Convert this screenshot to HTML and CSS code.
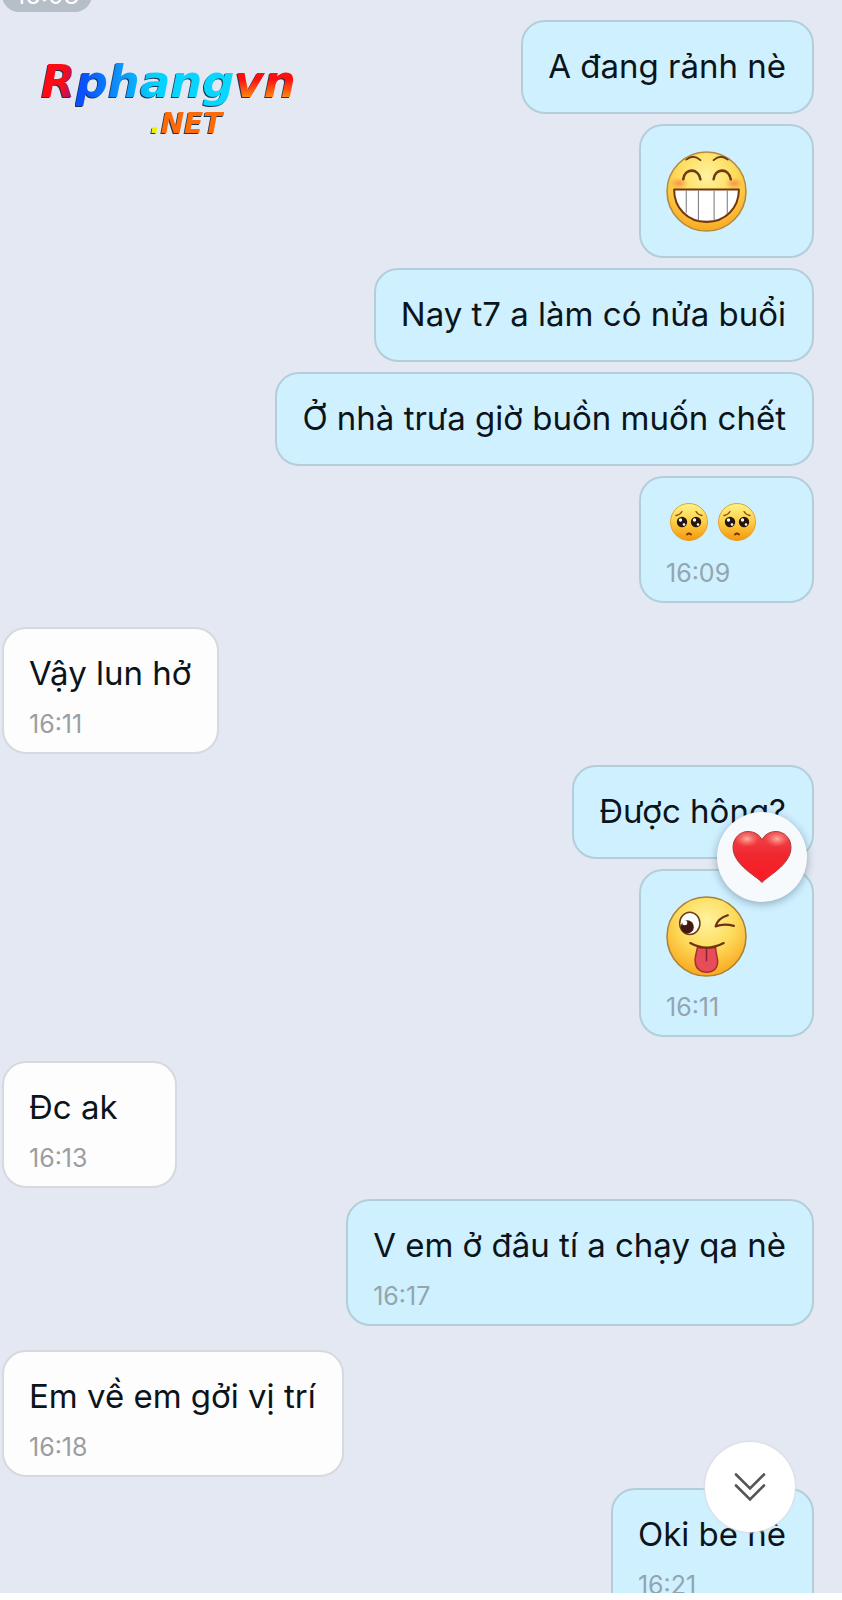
FILE: index.html
```html
<!DOCTYPE html>
<html lang="vi">
<head>
    <meta charset="UTF-8">
    <meta name="viewport" content="width=device-width, initial-scale=1">
    <title>Tin nhắn</title>
    <link rel="stylesheet" href="styles.css">
</head>
<body>
    <!-- Shared emoji shapes -->
    <svg class="defs" aria-hidden="true">
        <defs>
            <radialGradient id="face" cx="50%" cy="30%" r="72%">
                <stop offset="0" stop-color="#fff3a0"/>
                <stop offset="0.5" stop-color="#fddc5c"/>
                <stop offset="1" stop-color="#f9a51c"/>
            </radialGradient>
            <linearGradient id="face-small" x1="0" y1="0" x2="0" y2="1">
                <stop offset="0" stop-color="#fff389"/>
                <stop offset="0.5" stop-color="#fdce43"/>
                <stop offset="1" stop-color="#f5960f"/>
            </linearGradient>
            <radialGradient id="blush">
                <stop offset="0" stop-color="#f4673a" stop-opacity="0.6"/>
                <stop offset="1" stop-color="#f4673a" stop-opacity="0"/>
            </radialGradient>
            <linearGradient id="heart" x1="0" y1="0" x2="0" y2="1">
                <stop offset="0" stop-color="#ee4a4d"/>
                <stop offset="0.45" stop-color="#f0272f"/>
                <stop offset="1" stop-color="#fb1a24"/>
            </linearGradient>
            <radialGradient id="shine">
                <stop offset="0" stop-color="#ffc3b0" stop-opacity="0.85"/>
                <stop offset="1" stop-color="#ff8a80" stop-opacity="0"/>
            </radialGradient>
            <symbol id="pleading" viewBox="0 0 38 38">
                <circle cx="19" cy="19" r="18.5" fill="url(#face-small)" stroke="#e2a234" stroke-width="1"/>
                <path d="M6 12.500q4.500-1 6-4M32 12.500q-4.500-1-6-4" fill="none" stroke="#8a5410" stroke-width="1.3" stroke-linecap="round"/>
                <circle cx="12" cy="19" r="5.2" fill="#24160c"/>
                <circle cx="26" cy="19" r="5.2" fill="#24160c"/>
                <g fill="#fff">
                    <circle cx="10.5" cy="17" r="1.700"/>
                    <circle cx="24.5" cy="17" r="1.700"/>
                    <circle cx="14" cy="21.5" r="1.3"/>
                    <circle cx="28" cy="21.5" r="1.3"/>
                </g>
                <path d="M17 31.500q2-2 4 0" fill="none" stroke="#7d2c0c" stroke-width="1.800" stroke-linecap="round"/>
            </symbol>
        </defs>
    </svg>

    <main class="chat">
        <div class="chip-row"><span class="chip">16:08</span></div>

        <div class="logo">
            <div class="logo-name"><span class="c-r">R</span><span class="c-blue">phang</span><span class="c-vn">vn</span></div>
            <div class="logo-net"><span class="c-dot">.</span>NET</div>
        </div>

        <section class="group me">
            <div class="bubble"><p>A đang rảnh nè</p></div>
            <div class="bubble sticker">
                <svg class="emoji" viewBox="0 0 80 80" role="img" aria-label="Cười">
                    <circle cx="40" cy="40" r="39" fill="url(#face)" stroke="#b58a3c" stroke-width="1.500"/>
                    <ellipse cx="13" cy="32" rx="9" ry="6" fill="url(#blush)"/>
                    <ellipse cx="67" cy="32" rx="9" ry="6" fill="url(#blush)"/>
                    <path d="M20 8.500q7-6 14 .5M47 9q7-6.500 14-.5" fill="none" stroke="#6d3a12" stroke-width="1.800" stroke-linecap="round"/>
                    <path d="M17 28c1-11 15-12 17 0M47 28c1-11 15-12 17 0" fill="none" stroke="#6d3a12" stroke-width="2.500" stroke-linecap="round"/>
                    <path d="M8 38h64c0 18-13 32-32 32S8 56 8 38z" fill="#fff" stroke="#74360d" stroke-width="2" stroke-linejoin="round"/>
                    <path d="M20 39v22M32 39v30M47.500 39v30M60.500 39v23" stroke="#777" stroke-width="1"/>
                </svg>
            </div>
            <div class="bubble"><p>Nay t7 a làm có nửa buổi</p></div>
            <div class="bubble"><p>Ở nhà trưa giờ buồn muốn chết</p></div>
            <div class="bubble">
                <p class="emoji-line">
                    <svg class="emoji-small" role="img" aria-label="Năn nỉ"><use href="#pleading"/></svg>
                    <svg class="emoji-small" role="img" aria-label="Năn nỉ"><use href="#pleading"/></svg>
                </p>
                <time>16:09</time>
            </div>
        </section>

        <section class="group them">
            <div class="bubble">
                <p>Vậy lun hở</p>
                <time>16:11</time>
            </div>
        </section>

        <section class="group me">
            <div class="bubble">
                <p>Được hông?</p>
                <button class="reaction" type="button" aria-label="Yêu thích">
                    <svg viewBox="0 0 60 54">
                        <path d="M30 52.500C26 47 1 35 1 17.500C1 8 8 1.500 16 1.500C22.500 1.500 28 5 30 10C32 5 37.500 1.500 44 1.500C52 1.500 59 8 59 17.500C59 35 34 47 30 52.500z" fill="url(#heart)" stroke="#a83a3c" stroke-width="1"/>
                        <ellipse cx="15" cy="9" rx="12" ry="8" fill="url(#shine)"/>
                        <ellipse cx="45" cy="9" rx="12" ry="8" fill="url(#shine)"/>
                    </svg>
                </button>
            </div>
            <div class="bubble sticker">
                <svg class="emoji" viewBox="0 0 80 80" role="img" aria-label="Lè lưỡi">
                    <circle cx="40" cy="40" r="39" fill="url(#face)" stroke="#a98038" stroke-width="1.500"/>
                    <ellipse cx="23.500" cy="27" rx="10" ry="11" fill="#fff" stroke="#6b3c1b" stroke-width="1.500"/>
                    <circle cx="21" cy="30.500" r="6.500" fill="#431b0e"/>
                    <circle cx="18.500" cy="26.500" r="2.500" fill="#fff"/>
                    <path d="M61 19Q51 22 49 30Q57 27 67 29.500" fill="none" stroke="#6d3212" stroke-width="2.200" stroke-linecap="round" stroke-linejoin="round"/>
                    <path d="M31 51c-1 6-3 10-2 15c1 12 21 13 22 0c.5-5-2-9-2-15z" fill="#e64c5a" stroke="#a93030" stroke-width="1.500"/>
                    <path d="M40 51v13" stroke="#8d2430" stroke-width="1.500" stroke-linecap="round"/>
                    <path d="M24 46.500q16 9 33 0" fill="none" stroke="#6d3212" stroke-width="2.200" stroke-linecap="round"/>
                </svg>
                <time>16:11</time>
            </div>
        </section>

        <section class="group them">
            <div class="bubble">
                <p>Đc ak</p>
                <time>16:13</time>
            </div>
        </section>

        <section class="group me">
            <div class="bubble">
                <p>V em ở đâu tí a chạy qa nè</p>
                <time>16:17</time>
            </div>
        </section>

        <section class="group them">
            <div class="bubble">
                <p>Em về em gởi vị trí</p>
                <time>16:18</time>
            </div>
        </section>

        <section class="group me">
            <div class="bubble">
                <p>Oki bé nè</p>
                <time>16:21</time>
            </div>
        </section>

        <button class="scroll-down" type="button" aria-label="Xuống cuối">
            <svg viewBox="0 0 32 30">
                <path d="M2 2.500L16 16.500L30 2.500M2 13.500L16 27.500L30 13.500" fill="none" stroke="#555" stroke-width="2.600" stroke-linecap="round"/>
            </svg>
        </button>
    </main>

    <footer class="input-edge"></footer>
</body>
</html>
```
FILE: styles.css
```css
* { box-sizing: border-box; }

body {
    margin: 0;
    height: 100vh;
    display: flex;
    flex-direction: column;
    background: #fff;
    font-family: Inter, Roboto, sans-serif;
    color: #0b141a;
}

.defs { position: absolute; width: 0; height: 0; }

.chat {
    position: relative;
    flex: 1;
    min-height: 0;
    overflow: hidden;
    background: #e3e8f2;
    padding: 0 28px 0 2px;
}

/* day chip, already scrolled past the top */
.chip-row {
    height: 12px;
    margin-bottom: 8px;
    display: flex;
    align-items: flex-end;
    overflow: hidden;
}
.chip {
    padding: 0 13px;
    border-radius: 18px;
    background: #b6bec8;
    color: #fff;
    font-size: 25px;
    line-height: 34px;
}

/* messages */
.group {
    display: flex;
    flex-direction: column;
    gap: 10px;
    margin-bottom: 24px;
}
.group.them { align-items: flex-start; margin-bottom: 11px; }
.group.me { align-items: flex-end; }

.bubble {
    position: relative;
    min-width: 175px;
    padding: 21px 26px 23px 25px;
    border: 2px solid #d6d9de;
    border-radius: 24px;
    background: #fdfdfd;
}
.me .bubble {
    background: #cff0ff;
    border-color: #b4ced9;
}
.bubble:has(time) { padding-bottom: 12px; }

.bubble p {
    margin: 0;
    font-size: 33px;
    line-height: 46px;
}
.bubble time {
    display: block;
    margin-top: 12px;
    font-size: 25px;
    line-height: 32px;
    color: #9b9da0;
}
.me time { color: #93a5ae; }

.sticker { padding-top: 25px; padding-bottom: 24px; }
.sticker time { margin-top: 14px; }
.emoji { display: block; width: 81px; height: 81px; }
.emoji-line { display: flex; align-items: center; gap: 10px; height: 46px; padding-left: 4px; }
.emoji-small { width: 38px; height: 38px; }

/* floating buttons */
.reaction,
.scroll-down {
    position: absolute;
    z-index: 1;
    width: 90px;
    height: 90px;
    padding: 0;
    border: 0;
    border-radius: 50%;
    display: flex;
    align-items: center;
    justify-content: center;
    cursor: pointer;
}
.reaction {
    right: 5px;
    bottom: -45px;
    background: #f7fafc;
    box-shadow: 0 2px 8px rgba(40, 60, 80, 0.4);
}
.reaction svg { width: 60px; height: 54px; }
.scroll-down {
    right: 47px;
    bottom: 61px;
    background: #fff;
    box-shadow: 0 0 2px 1px #dadde2;
}
.scroll-down svg { width: 32px; height: 30px; }

/* site logo */
.logo {
    position: absolute;
    left: 41px;
    top: 56px;
    font-family: "DejaVu Sans", sans-serif;
    font-weight: bold;
    font-style: italic;
    filter: drop-shadow(-1px 1px 0 #1c3550);
}
.logo-name {
    display: flex;
    font-size: 45px;
    line-height: 52px;
}
.logo-name span,
.c-dot {
    color: transparent;
    -webkit-background-clip: text;
    background-clip: text;
}
.c-r { background-image: linear-gradient(100deg, #ff0a14 60%, #7b1fa0 90%); }
.c-blue { background-image: linear-gradient(90deg, #0a50ff 5%, #0c96fa 28%, #06d2ff 50%, #0ad8ff); }
.c-vn { background-image: linear-gradient(#fb1010 45%, #ff8a10 80%); }
.logo-net {
    margin: 0 0 0 109px;
    font-size: 28px;
    line-height: 32px;
    color: #ff6a08;
}
.c-dot { background-image: linear-gradient(#e8f000, #e8f000); }

.input-edge {
    height: 7px;
    background: #fff;
}
```
